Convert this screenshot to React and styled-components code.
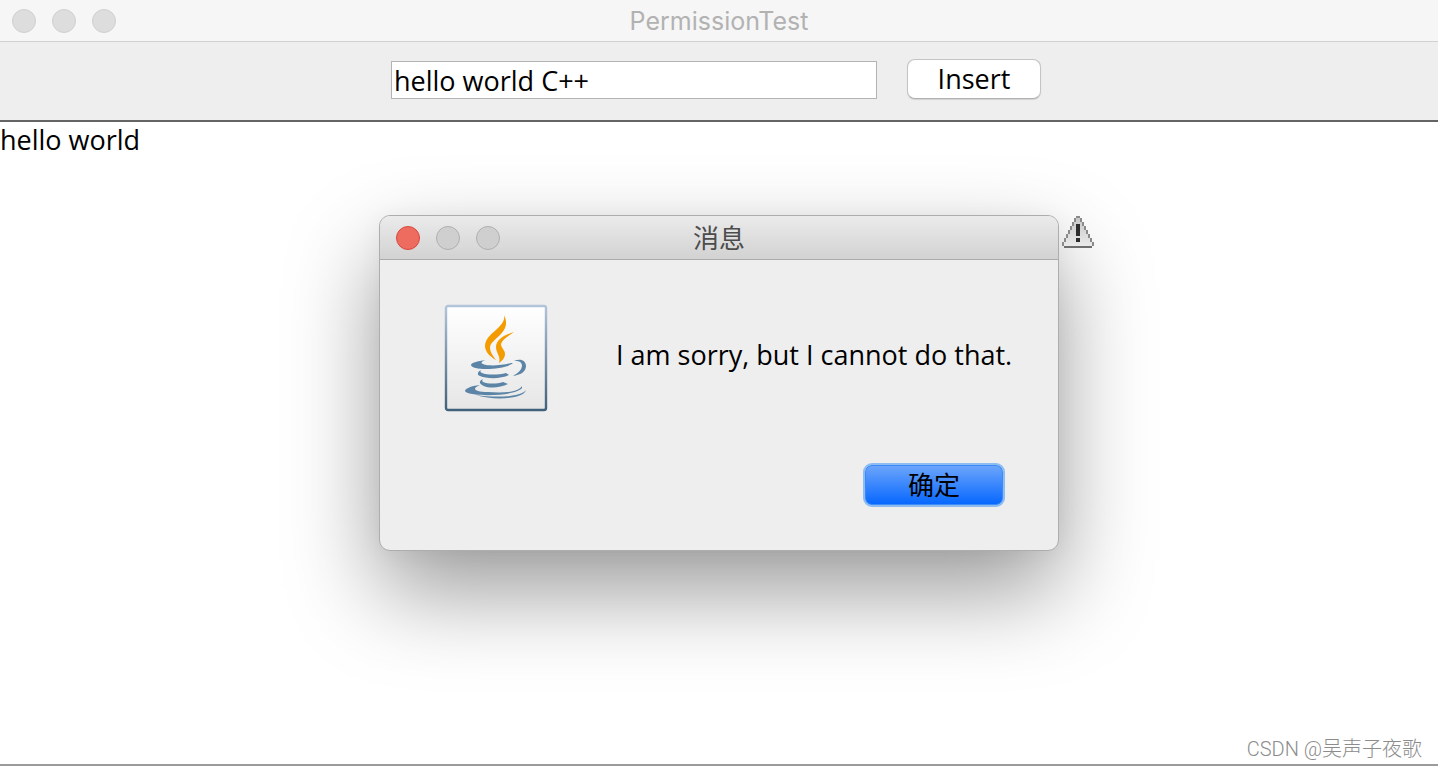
import React, { useState } from 'react';
import styled, { createGlobalStyle, css } from 'styled-components';

const GlobalStyle = createGlobalStyle`
  * {
    box-sizing: border-box;
  }

  body {
    margin: 0;
    background: #fff;
    color: #000;
    font-family: "Open Sans", "Noto Sans CJK SC", sans-serif;
    font-size: 27px;
    font-weight: 500;
  }
`;

const ScWindow = styled.main`
  position: relative;
  display: flex;
  flex-direction: column;
  min-height: 100vh;
`;

const ScTitleBar = styled.header`
  display: grid;
  grid-template-columns: 1fr auto 1fr;
  align-items: center;
  height: 42px;
  padding: 0 12px;
  background: #f6f6f6;
  border-bottom: 1px solid #d1d1d1;
`;

const ScTitle = styled.h1`
  margin: 0;
  color: #b2b2b2;
  font-family: Inter, sans-serif;
  font-size: 25px;
  font-weight: 400;
  line-height: 40px;
`;

const ScWindowButtons = styled.div`
  display: flex;
  gap: 16px;
`;

const ScWindowButton = styled.button`
  width: 24px;
  height: 24px;
  padding: 0;
  border: 1px solid #d0d0d0;
  border-radius: 50%;
  background: #dddddd;

  ${props =>
    props.$tone === 'grey' &&
    css`
      background: #cfcfcf;
      border-color: #b0b0b0;
    `
  }

  ${props =>
    props.$tone === 'red' &&
    css`
      background: #ee6b5f;
      border-color: #d8493f;
    `
  }
`;

const ScToolbar = styled.form`
  display: flex;
  justify-content: center;
  align-items: flex-start;
  gap: 30px;
  height: 80px;
  padding: 17px 6px 0 0;
  background: #eeeeee;
  border-bottom: 2px solid #646464;
`;

const ScTextField = styled.input`
  width: 486px;
  height: 38px;
  margin-top: 2px;
  padding: 0 2px;
  border: 1px solid #b3b3b3;
  border-radius: 0;
  outline: none;
  background: #fff;
  color: #000;
  font: inherit;
`;

const ScInsertButton = styled.button`
  width: 134px;
  height: 40px;
  padding: 0;
  border: 1px solid #c4c4c4;
  border-bottom-color: #b0b0b0;
  border-radius: 8px;
  background: #fff;
  box-shadow: 0 1px 1px rgba(0, 0, 0, 0.12);
  color: #000;
  font: inherit;
  line-height: 36px;
`;

const ScTextArea = styled.textarea`
  flex: 1;
  display: block;
  width: 100%;
  padding: 0;
  border: none;
  border-bottom: 2px solid #9b9b9b;
  outline: none;
  resize: none;
  background: #fff;
  color: #000;
  font: inherit;
  line-height: 36px;
`;

const ScBottomEdge = styled.div`
  height: 2px;
  background: #fff;
`;

const ScOverlay = styled.div`
  position: absolute;
  top: 215px;
  left: 0;
  right: 0;
  display: flex;
  justify-content: center;
  pointer-events: none;
`;

const ScDialog = styled.section`
  position: relative;
  width: 680px;
  border: 1px solid #adadad;
  border-radius: 11px;
  background: #eeeeee;
  box-shadow: 0 40px 92px rgba(0, 0, 0, 0.4), 0 2px 24px rgba(0, 0, 0, 0.04);
  pointer-events: auto;
`;

const ScDialogBar = styled.header`
  display: grid;
  grid-template-columns: 1fr auto 1fr;
  align-items: center;
  height: 44px;
  padding: 0 16px;
  border-bottom: 1px solid #ababab;
  border-radius: 10px 10px 0 0;
  background: linear-gradient(#ebebeb, #d2d2d2);
`;

const ScDialogTitle = styled.h2`
  margin: 0;
  color: #4c4c4c;
  font-size: 26px;
  font-weight: 400;
  line-height: 42px;
`;

const ScDialogBody = styled.div`
  display: flex;
  align-items: center;
  gap: 68px;
  padding: 44px 40px 0 64px;
`;

const ScMessage = styled.p`
  margin: 0;
  padding-bottom: 8px;
  white-space: nowrap;
`;

const ScDialogFooter = styled.footer`
  display: flex;
  justify-content: flex-end;
  padding: 51px 53px 43px;
`;

const ScConfirmButton = styled.button`
  width: 142px;
  height: 44px;
  padding: 0;
  border: 2px solid #8dbcf2;
  border-radius: 9px;
  background: linear-gradient(#6ea6fb, #0566ff) padding-box;
  box-shadow: inset 0 0 0 1px #3b8af5;
  color: #000;
  font: inherit;
  font-size: 26px;
  font-weight: 400;
  line-height: 38px;
`;

const ScWarning = styled.div`
  position: absolute;
  top: 0;
  left: 100%;
  margin-left: 4px;
  line-height: 0;
`;

const ScWatermark = styled.div`
  position: absolute;
  right: 16px;
  bottom: 4px;
  color: #8c8c8c;
  font-family: Roboto, "Noto Sans CJK SC", sans-serif;
  font-size: 20px;
  font-weight: 300;
  line-height: 30px;
`;

const JavaIcon = () => (
  <svg width="104" height="108" viewBox="0 0 104 108" aria-hidden="true">
    <defs>
      <linearGradient id="javaFace" x1="0" y1="0" x2="0" y2="1">
        <stop offset="0" stopColor="#fff" />
        <stop offset="1" stopColor="#e6e6e6" />
      </linearGradient>
      <linearGradient id="javaEdge" x1="0" y1="0" x2="0" y2="1">
        <stop offset="0" stopColor="#b2c4da" />
        <stop offset="1" stopColor="#41607a" />
      </linearGradient>
    </defs>
    <rect x="2" y="2" width="100" height="104" rx="2" fill="url(#javaFace)" stroke="url(#javaEdge)" strokeWidth="2.4" />
    <g fill="#f49b00">
      <path d="M60 11 C64 19 62 25 56 31 C50 37 46 39 46 44 C46 48 49 52 52 56 C45 52 41 47 41 42 C41 34 49 29 55 23 C59 19 61 15 60 11 Z" />
      <path d="M70 28 C63 33 58 36 57 40 C57 44 61 46 61 50 C61 54 58 57 55 59 C57 52 52 49 52 43 C52 36 60 31 70 28 Z" />
    </g>
    <g fill="#5b84a6">
      <path d="M42 56 C33 57 27 59 27 61 C28 67 61 66 69 59 L67 59 C57 62 41 62 39 60 C36 59 38 57 42 56 Z" />
      <path d="M70 57 C77 54 82 57 82 62 C82 68 76 71 69 72 C74 69 78 66 78 61 C77 57 74 57 70 57 Z" />
      <path d="M37 66 C33 68 33 71 36 72 C43 75 57 75 65 71 L62 69 C54 71 43 71 38 69 C36 68 36 67 37 66 Z" />
      <path d="M39 75 C35 77 35 79 38 81 C44 85 56 84 64 80 L59 78 C53 80 44 80 39 78 C38 77 38 76 39 75 Z" />
      <path d="M36 81 C26 82 21 85 21 87 C23 93 71 93 78 84 L78 82 C74 89 56 89 44 88 C29 88 28 84 36 81 Z" />
      <path d="M82 86 C77 93 52 94 32 91 C50 97 80 95 82 86 Z" />
    </g>
  </svg>
);

const WarningIcon = () => (
  <svg width="32" height="34" viewBox="0 0 32 34" role="img" aria-label="Warning">
    <defs>
      <linearGradient id="warningFace" x1="0" y1="0" x2="0" y2="1">
        <stop offset="0" stopColor="#c8c8c8" />
        <stop offset="1" stopColor="#eaeaea" />
      </linearGradient>
    </defs>
    <path d="M14 2 H18 V6 H20 V10 H22 V14 H24 V18 H26 V22 H28 V26 H30 V30 H2 V26 H4 V22 H6 V18 H8 V14 H10 V10 H12 V6 H14 Z" fill="url(#warningFace)" />
    <path
      d="M14 0h4v2h-4z M12 2h2v4h-2z M18 2h2v4h-2z M10 6h2v4h-2z M20 6h2v4h-2z M8 10h2v4h-2z M22 10h2v4h-2z M6 14h2v4h-2z M24 14h2v4h-2z M4 18h2v4h-2z M26 18h2v4h-2z M2 22h2v4h-2z M28 22h2v4h-2z M0 26h2v4h-2z M30 26h2v4h-2z"
      fill="#8a8a8a"
    />
    <path d="M2 30h28v2h-28z" fill="#6e6e6e" />
    <path d="M14 8h4v12h-4z M14 22h4v4h-4z" fill="#2c2c2c" />
  </svg>
);

const WindowButtons = ({ tones }) => (
  <ScWindowButtons>
    {['Close', 'Minimize', 'Zoom'].map((label, i) => (
      <ScWindowButton key={label} type="button" aria-label={label} $tone={tones[i]} />
    ))}
  </ScWindowButtons>
);

const App = () => {
  const [text, setText] = useState('hello world C++');

  return (
    <ScWindow>
      <GlobalStyle />
      <ScTitleBar>
        <WindowButtons tones={['light', 'light', 'light']} />
        <ScTitle>PermissionTest</ScTitle>
      </ScTitleBar>
      <ScToolbar onSubmit={e => e.preventDefault()}>
        <ScTextField aria-label="Text to insert" value={text} onChange={e => setText(e.target.value)} />
        <ScInsertButton type="submit">Insert</ScInsertButton>
      </ScToolbar>
      <ScTextArea aria-label="Text" defaultValue="hello world" />
      <ScBottomEdge />
      <ScOverlay>
        <ScDialog role="dialog" aria-labelledby="dialog-title">
          <ScDialogBar>
            <WindowButtons tones={['red', 'grey', 'grey']} />
            <ScDialogTitle id="dialog-title">消息</ScDialogTitle>
          </ScDialogBar>
          <ScDialogBody>
            <JavaIcon />
            <ScMessage>I am sorry, but I cannot do that.</ScMessage>
          </ScDialogBody>
          <ScDialogFooter>
            <ScConfirmButton type="button">确定</ScConfirmButton>
          </ScDialogFooter>
          <ScWarning>
            <WarningIcon />
          </ScWarning>
        </ScDialog>
      </ScOverlay>
      <ScWatermark>CSDN @吴声子夜歌</ScWatermark>
    </ScWindow>
  );
};

export default App;
